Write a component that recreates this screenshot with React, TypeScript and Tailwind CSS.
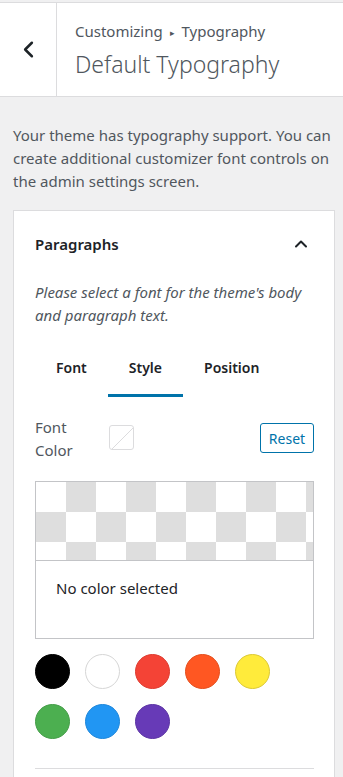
import { ChevronLeft, ChevronUp } from "lucide-react";

const swatches = [
  { c: "bg-[#000000]", b: "border-[#000000]" },
  { c: "bg-white", b: "border-[#d6d6d6]" },
  { c: "bg-[#f44336]", b: "border-[#de3b2f]" },
  { c: "bg-[#ff5722]", b: "border-[#e44e1c]" },
  { c: "bg-[#ffeb3b]", b: "border-[#dcc935]" },
  { c: "bg-[#4caf50]", b: "border-[#449d48]" },
  { c: "bg-[#2196f3]", b: "border-[#1e87db]" },
  { c: "bg-[#673ab7]", b: "border-[#5c34a4]" },
];

export default function App() {
  return (
    <div className="h-[777px] overflow-hidden bg-[#f0f0f1] pt-[2px] font-['Noto_Sans',sans-serif] text-[#50575e]">
      {/* Header */}
      <header className="flex h-[95px] border-y border-[#dcdcde] bg-white">
        <button className="flex w-[57px] shrink-0 items-center justify-center border-r border-[#dcdcde] text-[#1d2327]">
          <ChevronLeft size={27} strokeWidth={2.2} />
        </button>
        <div className="flex flex-col justify-center pl-[18px]">
          <div className="text-[15px] leading-[20px] text-[#50575e]">
            Customizing <span className="mx-[3px] align-[1px] text-[9px]">▸</span> Typography
          </div>
          <div className="mt-[7px] text-[23px] font-light leading-[28px] text-[#50575e]">Default Typography</div>
        </div>
      </header>

      <p className="pl-[13px] pr-[5px] pt-[27px] text-[15px] leading-[23px]">
        Your theme has typography support. You can create additional customizer font controls on the admin settings screen.
      </p>

      {/* Card */}
      <section className="ml-[13px] mr-[8px] mt-[17px] border border-[#dcdcde] bg-white pl-[21px] pr-[20px] pt-[21px]">
        <div className="flex items-center justify-between">
          <h3 className="text-[15px] font-semibold leading-[24px] text-[#1d2327]">Paragraphs</h3>
          <ChevronUp size={20} strokeWidth={2.4} className="mr-[3px] text-[#1d2327]" />
        </div>
        <p className="mt-[25px] text-[15px] italic leading-[23px]">
          Please select a font for the theme's body and paragraph text.
        </p>

        <div className="mt-[29px] flex text-[14px] font-semibold text-[#1d2327]">
          <div className="px-[21px] pb-[16px] pt-[1px] leading-[22px]">Font</div>
          <div className="border-b-[3px] border-[#0073aa] px-[21px] pb-[15px] pt-[1px] leading-[22px]">Style</div>
          <div className="px-[21px] pb-[16px] pt-[1px] leading-[22px]">Position</div>
        </div>

        <div className="mt-[19px] flex items-start">
          <div className="w-[74px] text-[15px] leading-[23px]">
            Font
            <br />
            Color
          </div>
          <div className="relative mt-[9px] h-[25px] w-[25px] overflow-hidden rounded-[3px] border border-[#dcdcde]">
            <svg className="absolute inset-0" width="25" height="25" viewBox="0 0 25 25">
              <line x1="0" y1="25" x2="25" y2="0" stroke="#dcdcde" strokeWidth="1" />
            </svg>
          </div>
          <button className="ml-auto mt-[7px] h-[30px] w-[54px] rounded-[3px] border border-[#0073aa] text-[14px] text-[#0073aa]">
            Reset
          </button>
        </div>

        <div className="mt-[19px] border border-[#c3c4c7]">
          <div className="h-[79px] border-b border-[#c3c4c7] bg-[repeating-conic-gradient(#dedede_0_25%,#ffffff_0_50%)] bg-[length:60px_60px]" />
          <div className="h-[77px] px-[20px] pt-[16px] text-[15px] leading-[22px] text-[#1d2327]">No color selected</div>
        </div>

        <div className="mt-[15px] grid w-[235px] grid-cols-5 gap-x-[15px] gap-y-[15px]">
          {swatches.map((s, i) => (
            <div key={i} className={`h-[35px] w-[35px] rounded-full border ${s.c} ${s.b}`} />
          ))}
        </div>

        <div className="mt-[29px] border-t border-[#dcdcde]" />
        <div className="h-[20px]" />
      </section>
    </div>
  );
}
